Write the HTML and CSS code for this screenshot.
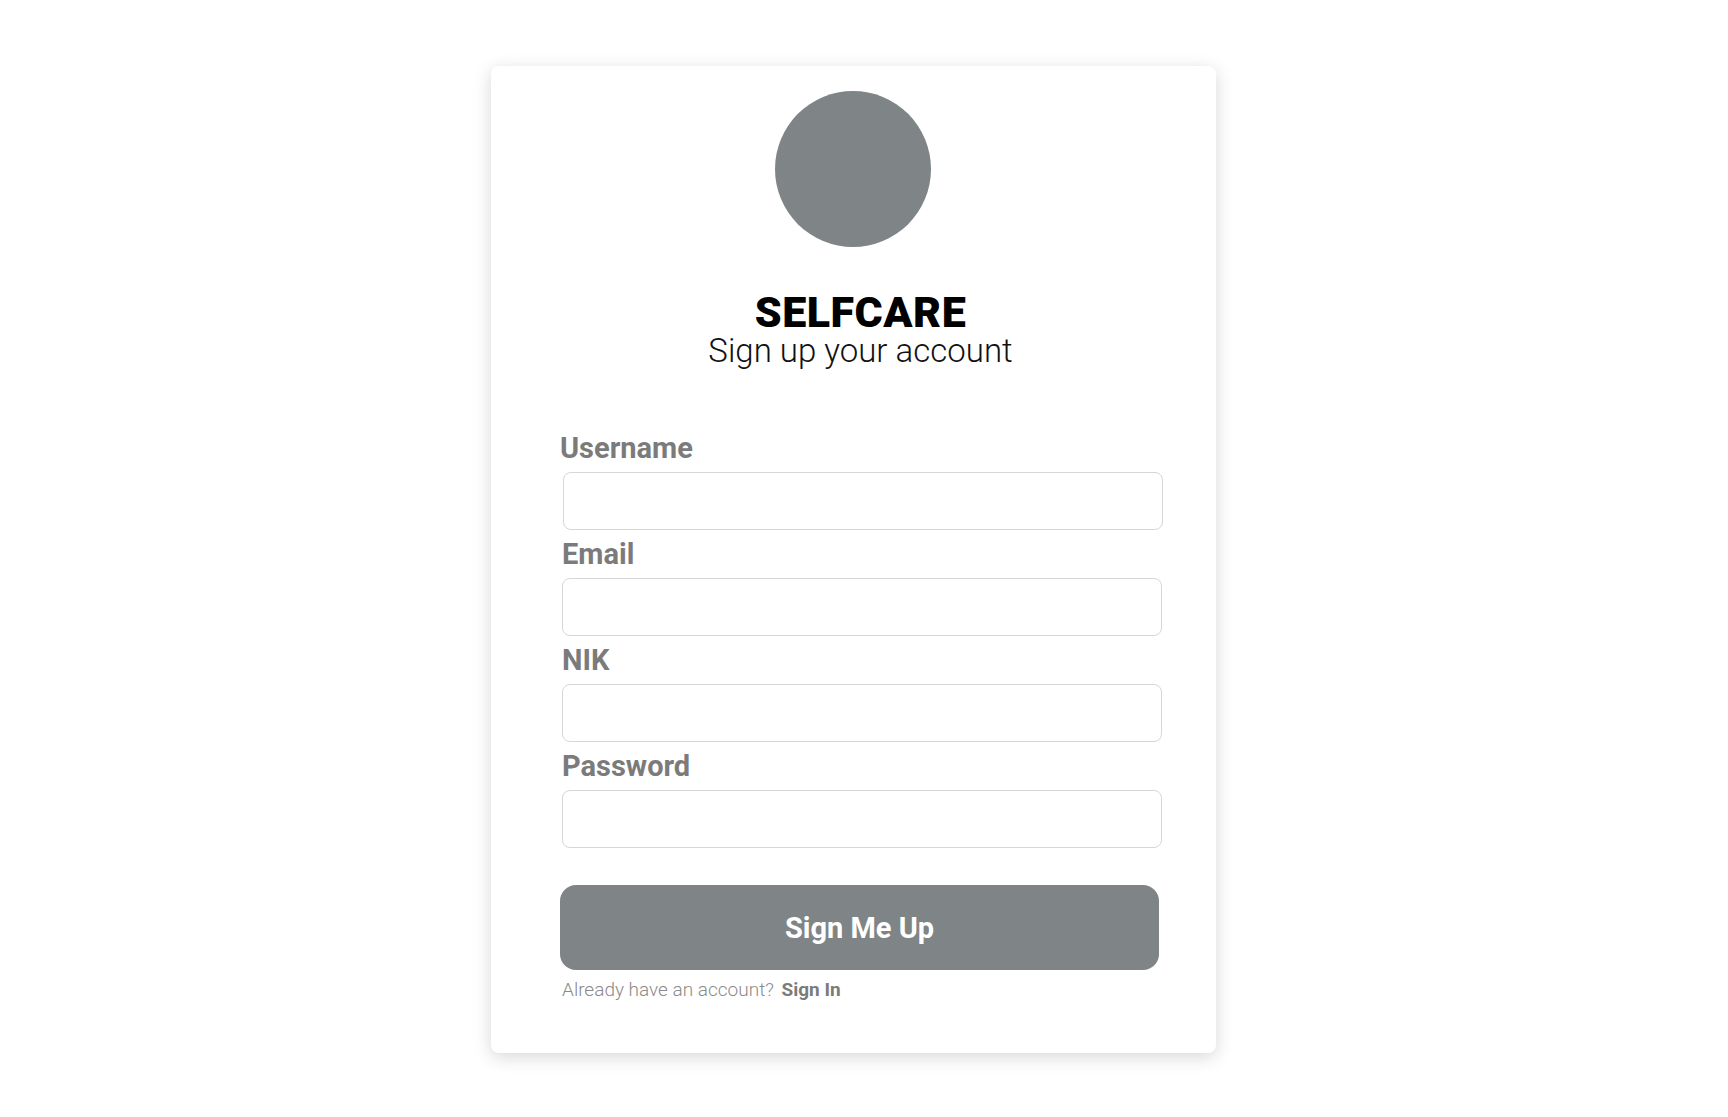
FILE: index.html
```html
<!DOCTYPE html>
<html lang="en">
<head>
<meta charset="utf-8">
<title>Selfcare - Sign up</title>
<link rel="stylesheet" href="styles.css">
</head>
<body>
<div class="page">
  <div class="card">
    <div class="avatar"></div>
    <div class="brand">
      <h1 class="brand-title">SELFCARE</h1>
      <p class="brand-sub">Sign up your account</p>
    </div>
    <form class="form">
      <div class="field field-first">
        <label class="label">Username</label>
        <input class="input" type="text">
      </div>
      <div class="field">
        <label class="label">Email</label>
        <input class="input" type="email">
      </div>
      <div class="field">
        <label class="label">NIK</label>
        <input class="input" type="text">
      </div>
      <div class="field">
        <label class="label">Password</label>
        <input class="input" type="password">
      </div>
      <button class="submit" type="button">Sign Me Up</button>
      <p class="signin">Already have an account? <a class="signin-link">Sign In</a></p>
    </form>
  </div>
</div>
</body>
</html>
```

FILE: styles.css
```css
* { box-sizing: border-box; }
html, body { margin: 0; padding: 0; background: #ffffff; }
body { font-family: "Roboto", "Open Sans", sans-serif; }

.page {
  display: flex;
  padding: 66px 0 66px 491px;
}

.card {
  width: 725px;
  height: 987px;
  background: #fff;
  border-radius: 8px;
  box-shadow: 0 4px 18px rgba(0, 0, 0, 0.16);
  display: flex;
  flex-direction: column;
  align-items: center;
  padding: 25px 0 0 0;
}

.avatar {
  width: 156px;
  height: 156px;
  border-radius: 50%;
  background: #7f8486;
  margin-left: -2px;
}

.brand {
  margin-top: 43px;
  margin-left: 14px;
  text-align: center;
}

.brand-title {
  margin: 0;
  font-size: 43px;
  line-height: 44px;
  font-weight: 900;
  color: #000;
  letter-spacing: 0.5px;
}

.brand-sub {
  margin: 0;
  font-size: 33px;
  line-height: 34px;
  font-weight: 300;
  color: #111;
}

.form {
  align-self: flex-start;
  margin-left: 69px;
  width: 602px;
  margin-top: 56px;
  display: flex;
  flex-direction: column;
}

.field {
  display: flex;
  flex-direction: column;
  padding-left: 2px;
}

.field-first .label { margin-left: -2px; }
.field-first .input { margin-left: 1px; }

.label {
  font-size: 29px;
  line-height: 48px;
  font-weight: 700;
  color: #7b7b7b;
}

.input {
  width: 600px;
  height: 58px;
  border: 1px solid #d6d6d6;
  border-radius: 8px;
  background: #fff;
  font-size: 18px;
  padding: 0 14px;
}

.submit {
  margin-top: 37px;
  width: 599px;
  height: 85px;
  border: none;
  border-radius: 16px;
  background: #7f8486;
  color: #fff;
  font-family: inherit;
  font-size: 29px;
  font-weight: 700;
}

.signin {
  margin: 5px 0 0 2px;
  font-size: 19px;
  line-height: 30px;
  font-weight: 300;
  color: #8a8a8a;
}

.signin-link {
  font-weight: 700;
  color: #7b7b7b;
  margin-left: 3px;
}
```
